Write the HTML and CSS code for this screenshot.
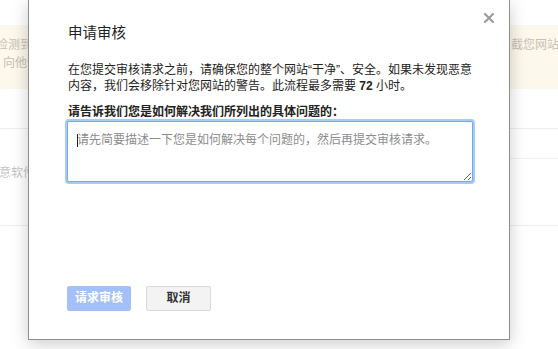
FILE: index.html
```html
<!DOCTYPE html>
<html lang="zh-CN">
<head>
<meta charset="utf-8">
<title>申请审核</title>
<link rel="stylesheet" href="styles.css">
</head>
<body>
<div class="page">
  <div class="notice">
    <div class="notice-left">
      <div class="nline shift">检测到您网站上的恶意软件，我们会警告用户</div>
      <div class="nline">向他们提示风险</div>
    </div>
    <div class="notice-right">
      <div class="nline">截您网站上的</div>
    </div>
  </div>
  <div class="row row-top"></div>
  <div class="row row-main">
    <div class="row-left">意软件</div>
    <div class="row-right"><div class="row-right-sub"></div></div>
  </div>
</div>

<div class="dialog" role="dialog" aria-labelledby="dlg-title">
  <button class="close" aria-label="关闭">
    <svg width="10" height="10" viewBox="0 0 10 10"><path d="M1 1 L9 9 M9 1 L1 9" stroke="#9a9a9a" stroke-width="2" stroke-linecap="square"/></svg>
  </button>
  <h1 class="title" id="dlg-title">申请审核</h1>
  <p class="intro">在您提交审核请求之前，请确保您的整个网站“干净”、安全。如果未发现恶意内容，我们会移除针对您网站的警告。此流程最多需要 <b>72</b> 小时。</p>
  <label class="label" for="desc">请告诉我们您是如何解决我们所列出的具体问题的：</label>
  <div class="field">
    <textarea id="desc" class="textarea" placeholder="请先简要描述一下您是如何解决每个问题的，然后再提交审核请求。"></textarea>
  </div>
  <div class="actions">
    <button class="btn btn-primary" disabled>请求审核</button>
    <button class="btn btn-cancel">取消</button>
  </div>
</div>
</body>
</html>
```

FILE: styles.css
```css
html, body {
  margin: 0;
  padding: 0;
  background: #ffffff;
  width: 558px;
  height: 349px;
  overflow: hidden;
  font-family: "Liberation Sans", "Noto Sans CJK SC", sans-serif;
}

/* faded page behind the modal */
.page {
  padding-top: 25px;
  color: #c6c1b6;
  font-size: 12px;
}

.notice {
  height: 64px;
  background: #fcf8eb;
  display: grid;
  grid-template-columns: 1fr 47px;
  padding-top: 11px;
  box-sizing: border-box;
  white-space: nowrap;
}

.nline {
  line-height: 18px;
}

.shift {
  margin-left: -7px;
}

.notice-left {
  padding-left: 3px;
  overflow: hidden;
}

.notice-right {
  overflow: visible;
}

.row {
  border-bottom: 1px solid #eeeeee;
}

.row-top {
  height: 39px;
}

.row-main {
  height: 96px;
  display: grid;
  grid-template-columns: 1fr 49px;
}

.row-left {
  line-height: 18px;
  padding-top: 35px;
  margin-left: -1px;
  color: #c4c4c4;
}

.row-right-sub {
  height: 29px;
  border-bottom: 1px solid #f1f1f1;
}

/* dialog */
.dialog {
  position: absolute;
  left: 28px;
  top: 0;
  width: 482px;
  box-sizing: border-box;
  background: #ffffff;
  border: 1px solid #8e8e8e;
  border-top: none;
  box-shadow: 0 4px 16px rgba(0, 0, 0, 0.2);
  padding: 23px 33px 28px 39px;
  color: #222222;
}

.close {
  position: absolute;
  top: 13px;
  right: 15px;
  width: 10px;
  height: 10px;
  padding: 0;
  border: none;
  background: none;
  display: block;
}

.close svg {
  display: block;
}

.title {
  margin: 0;
  font-size: 14.5px;
  font-weight: normal;
  line-height: 20px;
  color: #222222;
}

.intro {
  margin: 19px 0 0 0;
  font-size: 12px;
  line-height: 16px;
  color: #222222;
}

.intro b {
  font-weight: bold;
}

.label {
  display: block;
  margin-top: 10px;
  font-size: 12px;
  line-height: 16px;
  font-weight: bold;
  color: #222222;
}

.field {
  position: relative;
  margin: 1px 0 0 -1px;
  width: 406px;
  height: 61px;
}

.field::after {
  content: "";
  position: absolute;
  left: 10px;
  top: 13px;
  width: 1px;
  height: 13px;
  background: #222222;
}

.textarea {
  display: block;
  width: 406px;
  height: 61px;
  box-sizing: border-box;
  margin: 0;
  padding: 10px 9px;
  border: 1px solid #77aae9;
  border-radius: 2px;
  box-shadow: 0 0 0 2px #a9cbf3;
  outline: none;
  font-family: "Liberation Sans", "Noto Sans CJK SC", sans-serif;
  font-size: 12px;
  line-height: 16px;
  color: #222222;
  resize: both;
}

.textarea::placeholder {
  color: #8c8c8c;
}

.actions {
  margin-top: 104px;
  display: flex;
  gap: 15px;
}

.btn {
  height: 25px;
  box-sizing: border-box;
  border-radius: 2px;
  font-family: "Liberation Sans", "Noto Sans CJK SC", sans-serif;
  font-size: 12px;
  font-weight: bold;
  line-height: 23px;
  padding: 0;
  margin: 0;
}

.btn-primary {
  width: 64px;
  margin-left: -1px;
  background: #a3c0f8;
  border: 1px solid #a3c0f8;
  color: #ffffff;
}

.btn-cancel {
  width: 65px;
  background: #f3f3f3;
  border: 1px solid #d9d9d9;
  color: #333333;
}
```
